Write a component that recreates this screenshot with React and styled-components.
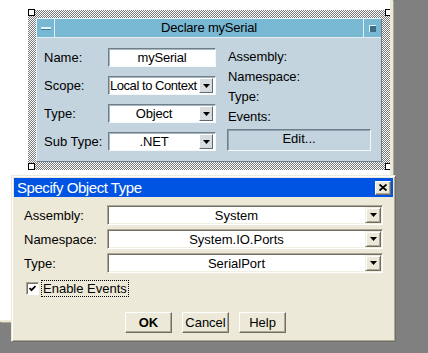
import styled, { createGlobalStyle } from 'styled-components';

const GlobalStyle = createGlobalStyle`
  html, body {
    margin: 0;
    padding: 0;
    background: #808080;
  }
  body {
    font-family: "Liberation Sans", Arial, sans-serif;
    font-size: 13px;
    color: #000;
  }
`;

const Screen = styled.div`
  position: relative;
  width: 428px;
  height: 353px;
  overflow: hidden;
  background: #808080;
`;

const Canvas = styled.div`
  width: 362px;
  height: 310px;
  padding: 10px 0 0 28px;
  background: #fff;
  border-right: 3px solid #ece9d8;
  border-bottom: 2px solid #ece9d8;
  box-shadow: 1px 1px 0 #a9a797;
  overflow: hidden;
`;

const Selection = styled.div`
  position: relative;
  width: 346px;
  padding: 8px;
  background: repeating-conic-gradient(#7a7a7a 0 25%, #ffffff 0 50%) 0 0 / 2px 2px;
`;

const Handle = styled.span`
  position: absolute;
  width: 5px;
  height: 5px;
  background: #fff;
  border: 1px solid #000;
  ${(p) => (p.$top ? 'top: -1px;' : 'bottom: 0;')}
  ${(p) => (p.$left ? 'left: 0;' : 'right: -2px;')}
`;

const Panel = styled.div`
  box-sizing: border-box;
  height: 144px;
  border: 1px solid;
  border-color: #e6eff4 #6c7f8b #6c7f8b #e6eff4;
  background: #c3d4de;
  display: flex;
  flex-direction: column;
`;

const PanelTitle = styled.div`
  height: 18px;
  display: flex;
  align-items: stretch;
  background: #79b8d2;
  border-bottom: 1px solid #e2edf2;
`;

const TitleButton = styled.div`
  width: 17px;
  display: flex;
  align-items: center;
  justify-content: center;
  ${(p) => (p.$side === 'left' ? 'border-right: 1px solid #e2edf2;' : 'border-left: 1px solid #e2edf2;')}
`;

const MinIcon = styled.span`
  width: 10px;
  height: 2px;
  background: #e4f1f7;
  border-bottom: 1px solid #3f7c96;
`;

const RestoreIcon = styled.span`
  width: 6px;
  height: 6px;
  background: #3b6f86;
  border-top: 1px solid #e4f1f7;
  border-left: 1px solid #e4f1f7;
`;

const PanelHeading = styled.div`
  flex: 1;
  text-align: center;
  line-height: 18px;
  letter-spacing: -0.2px;
`;

const PanelBody = styled.div`
  display: flex;
  gap: 11px;
  padding: 10px 0 0 7px;
`;

const FieldGrid = styled.div`
  display: grid;
  grid-template-columns: 64px 108px;
  grid-auto-rows: 19px;
  row-gap: 9px;
  align-items: center;
`;

const Field = styled.div`
  box-sizing: border-box;
  height: 19px;
  display: flex;
  align-items: center;
  background: #fff;
  border: 1px solid;
  border-color: #6f7f89 #f4f8fa #f4f8fa #6f7f89;
  box-shadow: inset 1px 1px 0 #a7b7c1;
  overflow: hidden;
`;

const FieldText = styled.span`
  flex: 1;
  min-width: 0;
  overflow: hidden;
  white-space: nowrap;
  text-align: ${(p) => (p.$left ? 'left' : 'center')};
  padding-left: ${(p) => (p.$left ? '1px' : '0')};
  letter-spacing: ${(p) => (p.$left ? '-0.45px' : '-0.2px')};
`;

const PanelDrop = styled.span`
  flex: none;
  box-sizing: border-box;
  width: 14px;
  height: 15px;
  margin-right: 2px;
  display: flex;
  align-items: center;
  justify-content: center;
  background: #d9dcde;
  border: 1px solid;
  border-color: #fff #5e6a71 #5e6a71 #fff;
`;

const InfoColumn = styled.div`
  width: 144px;
  margin-top: -1px;
  display: flex;
  flex-direction: column;
`;

const InfoLabel = styled.div`
  line-height: 20px;
  padding-left: 1px;
  letter-spacing: -0.1px;
`;

const EditButton = styled.div`
  box-sizing: border-box;
  height: 22px;
  margin-top: 2px;
  text-align: center;
  line-height: 18px;
  border: 1px solid;
  border-color: #6f7f89 #f4f8fa #f4f8fa #6f7f89;
  box-shadow: inset 1px 1px 0 #90a2ad;
`;

const Dialog = styled.div`
  position: absolute;
  left: 11px;
  top: 175px;
  width: 385px;
  box-sizing: border-box;
  padding: 2px;
  background: #ece9d8;
  border: 1px solid;
  border-color: #ece9d8 #716f64 #716f64 #ece9d8;
  box-shadow: inset 1px 1px 0 #fff, inset -1px -1px 0 #aca899;
`;

const DialogTitle = styled.div`
  height: 19px;
  display: flex;
  align-items: center;
  justify-content: space-between;
  padding: 0 2px 0 3px;
  background: #0054e3;
  color: #fff;
  font-size: 15px;
  letter-spacing: -0.45px;
`;

const CloseButton = styled.span`
  box-sizing: border-box;
  width: 16px;
  height: 14px;
  display: flex;
  align-items: center;
  justify-content: center;
  background: #ece9d8;
  border: 1px solid;
  border-color: #fff #716f64 #716f64 #fff;
  box-shadow: inset -1px -1px 0 #aca899;
`;

const DialogBody = styled.div`
  padding: 8px 8px 6px 10px;
  display: flex;
  flex-direction: column;
`;

const ComboGrid = styled.div`
  display: grid;
  grid-template-columns: 83px 276px;
  grid-auto-rows: 20px;
  row-gap: 4px;
  align-items: center;
`;

const Combo = styled.div`
  box-sizing: border-box;
  height: 20px;
  display: flex;
  align-items: center;
  background: #fff;
  border: 1px solid;
  border-color: #aca899 #fff #fff #aca899;
  box-shadow: inset 1px 1px 0 #716f64, inset -1px -1px 0 #f1efe2;
`;

const ComboText = styled.span`
  flex: 1;
  text-align: center;
`;

const ComboDrop = styled.span`
  box-sizing: border-box;
  width: 16px;
  height: 16px;
  margin-right: 1px;
  display: flex;
  align-items: center;
  justify-content: center;
  background: #ece9d8;
  border: 1px solid;
  border-color: #f1efe2 #716f64 #716f64 #f1efe2;
  box-shadow: inset 1px 1px 0 #fff, inset -1px -1px 0 #aca899;
`;

const CheckRow = styled.div`
  display: flex;
  align-items: center;
  gap: 2px;
  margin: 7px 0 0 2px;
  height: 17px;
`;

const CheckBox = styled.span`
  box-sizing: border-box;
  width: 13px;
  height: 13px;
  display: flex;
  align-items: center;
  justify-content: center;
  background: #fff;
  border: 1px solid;
  border-color: #aca899 #fff #fff #aca899;
  box-shadow: inset 1px 1px 0 #716f64;
`;

const FocusLabel = styled.span`
  box-sizing: border-box;
  height: 17px;
  line-height: 15px;
  padding: 0 1px;
  border: 1px dotted #000;
`;

const ButtonRow = styled.div`
  display: flex;
  justify-content: center;
  gap: 10px;
  margin-top: 15px;
  padding-left: 2px;
`;

const PushButton = styled.span`
  box-sizing: border-box;
  width: 47px;
  height: 21px;
  display: flex;
  align-items: center;
  justify-content: center;
  font-weight: ${(p) => (p.$default ? 'bold' : 'normal')};
  border: 1px solid;
  border-color: #fff #716f64 #716f64 #fff;
  box-shadow: inset -1px -1px 0 #aca899;
`;

const Arrow = () => (
  <svg width="7" height="4" viewBox="0 0 7 4">
    <polygon points="0,0 7,0 3.5,4" fill="#000" />
  </svg>
);

const panelFields = [
  { label: 'Name:', value: 'mySerial' },
  { label: 'Scope:', value: 'Local to Context', combo: true, left: true },
  { label: 'Type:', value: 'Object', combo: true },
  { label: 'Sub Type:', value: '.NET', combo: true },
];

const objectFields = [
  { label: 'Assembly:', value: 'System' },
  { label: 'Namespace:', value: 'System.IO.Ports' },
  { label: 'Type:', value: 'SerialPort' },
];

export default function App() {
  return (
    <Screen>
      <GlobalStyle />
      <Canvas>
        <Selection>
          <Handle $top $left />
          <Handle $top />
          <Handle $left />
          <Handle />
          <Panel>
            <PanelTitle>
              <TitleButton $side="left">
                <MinIcon />
              </TitleButton>
              <PanelHeading>Declare mySerial</PanelHeading>
              <TitleButton $side="right">
                <RestoreIcon />
              </TitleButton>
            </PanelTitle>
            <PanelBody>
              <FieldGrid>
                {panelFields.map((f) => [
                  <span key={f.label + '-l'}>{f.label}</span>,
                  <Field key={f.label + '-f'}>
                    <FieldText $left={f.left}>{f.value}</FieldText>
                    {f.combo && (
                      <PanelDrop>
                        <Arrow />
                      </PanelDrop>
                    )}
                  </Field>,
                ])}
              </FieldGrid>
              <InfoColumn>
                <InfoLabel>Assembly:</InfoLabel>
                <InfoLabel>Namespace:</InfoLabel>
                <InfoLabel>Type:</InfoLabel>
                <InfoLabel>Events:</InfoLabel>
                <EditButton>Edit...</EditButton>
              </InfoColumn>
            </PanelBody>
          </Panel>
        </Selection>
      </Canvas>

      <Dialog>
        <DialogTitle>
          <span>Specify Object Type</span>
          <CloseButton>
            <svg width="8" height="7" viewBox="0 0 8 7">
              <path d="M0.5 0.5 L7.5 6.5 M7.5 0.5 L0.5 6.5" stroke="#000" strokeWidth="1.8" />
            </svg>
          </CloseButton>
        </DialogTitle>
        <DialogBody>
          <ComboGrid>
            {objectFields.map((f) => [
              <span key={f.label + '-l'}>{f.label}</span>,
              <Combo key={f.label + '-c'}>
                <ComboText>{f.value}</ComboText>
                <ComboDrop>
                  <Arrow />
                </ComboDrop>
              </Combo>,
            ])}
          </ComboGrid>
          <CheckRow>
            <CheckBox>
              <svg width="7" height="7" viewBox="0 0 7 7">
                <polyline points="0.5,3 2.5,5.2 6.5,1" fill="none" stroke="#000" strokeWidth="1.8" />
              </svg>
            </CheckBox>
            <FocusLabel>Enable Events</FocusLabel>
          </CheckRow>
          <ButtonRow>
            <PushButton $default>OK</PushButton>
            <PushButton>Cancel</PushButton>
            <PushButton>Help</PushButton>
          </ButtonRow>
        </DialogBody>
      </Dialog>
    </Screen>
  );
}
